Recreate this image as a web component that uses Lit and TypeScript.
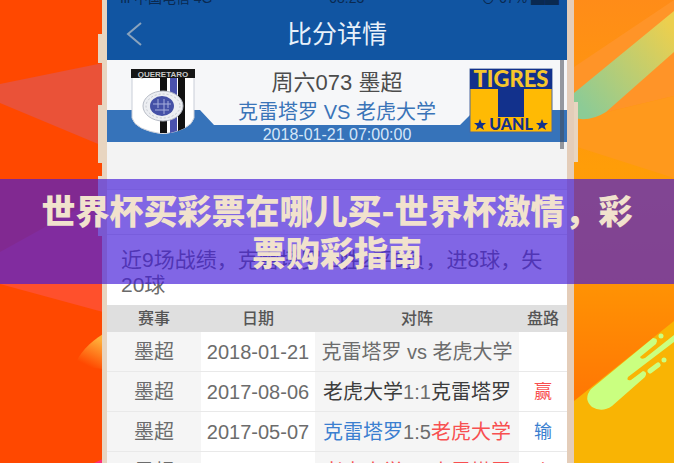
import { LitElement, html, svg, css } from "lit";
import { customElement } from "lit/decorators.js";

type Side = { name: string; tone: string };
type Row = { league: string; date: string; home: Side; score: string; away: Side; result: string; tone: string };

const rows: Row[] = [
  { league: "墨超", date: "2018-01-21", home: { name: "克雷塔罗", tone: "plain" }, score: " vs ", away: { name: "老虎大学", tone: "plain" }, result: "", tone: "plain" },
  { league: "墨超", date: "2017-08-06", home: { name: "老虎大学", tone: "dark" }, score: "1:1", away: { name: "克雷塔罗", tone: "dark" }, result: "赢", tone: "red" },
  { league: "墨超", date: "2017-05-07", home: { name: "克雷塔罗", tone: "blue" }, score: "1:5", away: { name: "老虎大学", tone: "red" }, result: "输", tone: "blue" },
  { league: "墨超", date: "2016-11-20", home: { name: "老虎大学", tone: "red" }, score: "2:0", away: { name: "克雷塔罗", tone: "red" }, result: "赢", tone: "red" },
];

const star = (x: number, y: number) => svg`
  <path transform="translate(${x} ${y})" fill="#12318c"
    d="M0 -6 L1.6 -1.9 L6 -1.9 L2.6 .9 L4 5 L0 2.5 L-4 5 L-2.6 .9 L-6 -1.9 L-1.6 -1.9Z"/>`;

@customElement("promo-backdrop")
export class PromoBackdrop extends LitElement {
  static styles = css`
    :host { position: absolute; inset: 0; }
    svg { display: block; width: 100%; height: 100%; }
  `;
  render() {
    return html`
      <svg viewBox="0 0 674 463" preserveAspectRatio="none" aria-hidden="true">
        <defs>
          <linearGradient id="warm" x1="0" y1="0" x2="0" y2="1">
            <stop offset="0" stop-color="#ff8c18"/>
            <stop offset=".36" stop-color="#ff9d08"/>
            <stop offset=".6" stop-color="#ff9404"/>
            <stop offset=".85" stop-color="#ff7804"/>
          </linearGradient>
          <linearGradient id="mint" gradientUnits="userSpaceOnUse" x1="580" y1="105" x2="674" y2="30">
            <stop offset="0" stop-color="#8ccb96"/>
            <stop offset="1" stop-color="#eccf4e"/>
          </linearGradient>
          <linearGradient id="glow" gradientUnits="userSpaceOnUse" x1="101" y1="340" x2="88" y2="366">
            <stop offset="0" stop-color="#ffb03a"/>
            <stop offset="1" stop-color="#ff4800"/>
          </linearGradient>
        </defs>
        <rect width="340" height="463" fill="#ff4800"/>
        <path d="M0 84 L103 63 V146 L0 103Z" fill="#ea5238"/>
        <path d="M0 252 L103 195 V312 L0 284Z" fill="#ff502c"/>
        <path d="M75 366 C78 354 90 342 103 334 V369Z" fill="url(#glow)"/>
        <path d="M94 463 L103 459 V463Z" fill="#ff2f78"/>
        <rect x="340" width="334" height="463" fill="url(#warm)"/>
        <path d="M574 67 L674 0 V96 L574 120Z" fill="#ff9428"/>
        <path d="M574 120 L674 96 V178 L574 146Z" fill="#ff991c"/>
        <path d="M574 401 L674 321 V463 H574Z" fill="#f9b404"/>
        <path d="M574 93 L674 11 V52 L606 112 Q590 122 574 118Z" fill="url(#mint)"/>
        <path fill="#caff80" d="M591 389 L653 338 Q659 338 656 344 L640 357 Q641 360 645 358 L674 335 V342 L628 377 Q626 381 631 380 L643 371 Q648 372 645 377 L612 406 Q602 413 592 407 Q583 399 591 389Z"/>
        <path d="M650 371 L658 365 M661 336 L661 336 M664 360 L664 360" fill="none" stroke="#caff80" stroke-width="5" stroke-linecap="round"/>
        <g fill="#e8d5c0">
          <rect x="102" width="6" height="463"/>
          <rect x="98" y="34" width="5" height="29"/>
          <rect x="98" y="105" width="5" height="58"/>
          <rect x="98" y="176" width="5" height="60"/>
          <rect x="566" width="8" height="463" fill="#e4cdb9"/>
          <rect x="574" y="102" width="4" height="60"/>
        </g>
      </svg>`;
  }
}

@customElement("match-card")
export class MatchCard extends LitElement {
  static styles = css`
    :host { display: grid; grid-template-columns: 64px 1fr 84px; position: relative; height: 82px; padding: 0 14px 0 24px; background: #f6f7f9; }
    .strip { position: absolute; inset: 0; width: 100%; height: 100%; }
    .crest { position: relative; display: block; width: 100%; height: 66px; margin-top: 8px; }
    .info { position: relative; padding-left: 10px; text-align: center; white-space: nowrap; display: flex; flex-direction: column; align-items: center; }
    .round { font-size: 22px; line-height: 28px; margin-top: 9px; color: #4c4c4c; }
    .teams { font-size: 20px; line-height: 30px; color: #3a74b8; }
    .time { font-size: 16px; line-height: 16px; color: #d5e6f8; }
  `;
  render() {
    return html`
      <svg class="strip" viewBox="0 0 460 82" preserveAspectRatio="none" aria-hidden="true">
        <path d="M0 50 H93 L107 65 H353 L368 50 H460 V82 H0Z" fill="#3673ba"/>
      </svg>
      <svg class="crest" viewBox="0 0 64 66" role="img" aria-label="克雷塔罗">
        <path d="M1 9 H63 V50 Q60 62 32 66 Q4 62 1 50Z" fill="#fff" stroke="#c9ced8"/>
        <path d="M29 9 H36 V65 H29Z M47 9 H54 V60 L47 63Z" fill="#111"/>
        <path d="M39 9 H46 V63 L39 65Z" fill="#4a52ae"/>
        <rect x="0" y="1" width="64" height="9" fill="#161616"/>
        <text x="32" y="9" text-anchor="middle" font-size="8" font-weight="700" fill="#c8c8c8" font-family="Liberation Sans, sans-serif">QUERETARO</text>
        <ellipse cx="32" cy="38" rx="20" ry="15" fill="#eceef2" stroke="#b7bcc6"/>
        <ellipse cx="32" cy="38" rx="17" ry="12" fill="none" stroke="#c4c8d0" stroke-dasharray="2 2"/>
        <ellipse cx="31" cy="38" rx="12" ry="10" fill="#4450a6"/>
        <path d="M22 36 H40 M24 42 H38 M27 31 V40 M33 31 V46 M37 33 V40" stroke="#a6aedc" fill="none"/>
      </svg>
      <div class="info">
        <div class="round">周六073 墨超</div>
        <div class="teams">克雷塔罗 VS 老虎大学</div>
        <time class="time">2018-01-21 07:00:00</time>
      </div>
      <svg class="crest" viewBox="0 0 84 66" role="img" aria-label="老虎大学">
        <rect x="1" y="1" width="82" height="63" fill="#ffba04" stroke="#4d69a0"/>
        <rect x="1" y="1" width="82" height="20" fill="#12318c"/>
        <rect x="29" y="20" width="26" height="29" fill="#12318c"/>
        <text x="42" y="19" text-anchor="middle" font-size="22" font-weight="900" fill="#f5c62c" font-family="Lato, sans-serif">TIGRES</text>
        <text x="42" y="62" text-anchor="middle" font-size="16" font-weight="900" fill="#12318c" font-family="Lato, sans-serif">UANL</text>
        ${star(11, 57)}${star(73, 57)}
      </svg>`;
  }
}

@customElement("history-table")
export class HistoryTable extends LitElement {
  static styles = css`
    :host { display: block; }
    table { width: 100%; border-collapse: collapse; table-layout: fixed; color: #6c6c6c; white-space: nowrap; }
    .league { width: 94px; }
    .date { width: 114px; }
    .result { width: 48px; }
    th { height: 27px; padding: 0; background: #dfdfdf; font-size: 16px; line-height: 20px; font-weight: 500; color: #555; }
    td { height: 39px; padding: 0; border-bottom: 1px solid #e9e9e9; font-size: 20px; line-height: 24px; text-align: center; white-space: pre; background: #fff; }
    td:nth-child(odd) { background: #f5f5f5; }
    .verdict { font-size: 18px; }
    .dark { color: #3c3c3c; }
    .blue { color: #3b7fd0; }
    .red { color: #f84f50; }
  `;
  render() {
    return html`
      <table>
        <thead>
          <tr><th class="league">赛事</th><th class="date">日期</th><th>对阵</th><th class="result">盘路</th></tr>
        </thead>
        <tbody>
          ${rows.map((r) => html`<tr><td>${r.league}</td><td>${r.date}</td><td><span class=${r.home.tone}>${r.home.name}</span>${r.score}<span class=${r.away.tone}>${r.away.name}</span></td><td class="verdict ${r.tone}">${r.result}</td></tr>`)}
        </tbody>
      </table>`;
  }
}

@customElement("app-root")
export class AppRoot extends LitElement {
  static styles = css`
    :host { display: grid; grid-template-columns: 107fr 460fr 107fr; position: relative; height: 100vh; overflow: hidden; font-family: "Liberation Sans", "Noto Sans CJK SC", sans-serif; }
    .phone { grid-column: 2; position: relative; min-width: 0; min-height: 0; background: #fff; overflow: hidden; }
    .status { display: flex; justify-content: space-between; align-items: flex-end; height: 8px; padding: 0 8px; overflow: hidden; background: #1155a2; color: #0a2950; font-size: 14px; line-height: 20px; white-space: nowrap; }
    .bar { display: grid; grid-template-columns: 52px 1fr 52px; align-items: center; height: 52px; background: #1155a2; }
    .back { border: 0; padding: 0 0 0 18px; background: none; display: flex; }
    .heading { margin: 0; text-align: center; font-size: 25px; line-height: 36px; font-weight: 400; color: #e9f1fa; }
    .gap { height: 47px; background: #f3f3f3; }
    .section { height: 46px; border-top: 1px solid #e2e2e2; border-bottom: 1px solid #e2e2e2; box-sizing: border-box; background: #fafafa; }
    .summary { margin: 0; padding: 12px 0 8px 14px; font-size: 21px; line-height: 25px; color: #6a6a6a; white-space: nowrap; }
    .thumb { position: absolute; top: 60px; right: 3px; width: 4px; height: 89px; background: rgba(70, 75, 85, 0.55); }
    .overlay { position: absolute; inset: 0; display: grid; align-items: center; }
    .banner { margin: 0; padding: 10px 40px 11px; background: rgba(67, 27, 216, 0.67); color: #f1e2cd; text-align: center; font-size: 34px; line-height: 42px; font-weight: 900; font-family: "Noto Sans CJK SC", sans-serif; }
  `;
  render() {
    return html`
      <promo-backdrop></promo-backdrop>
      <main class="phone">
        <div class="status"><span>•ıll 中国电信 4G</span><span>08:23</span><span>⊙ 67% ▆▆</span></div>
        <header class="bar">
          <button class="back" aria-label="返回">
            <svg width="18" height="24" viewBox="0 0 18 24"><path d="M16 1 L3 12 L16 23" fill="none" stroke="#8aa3bd" stroke-width="2"/></svg>
          </button>
          <h2 class="heading">比分详情</h2>
        </header>
        <match-card></match-card>
        <div class="gap"></div>
        <div class="section"></div>
        <p class="summary">近9场战绩，克雷塔罗 2胜2平5负，进8球，失<br>20球</p>
        <history-table></history-table>
        <div class="thumb"></div>
      </main>
      <div class="overlay"><h1 class="banner">世界杯买彩票在哪儿买-世界杯激情，彩票购彩指南</h1></div>`;
  }
}
